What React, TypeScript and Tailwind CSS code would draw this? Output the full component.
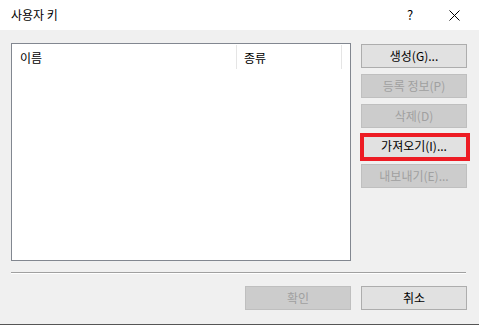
import React from "react";

const font = { fontFamily: '"Noto Sans CJK KR", "Noto Sans", sans-serif' };

function Btn({ label, disabled }: { label: string; disabled?: boolean }) {
    return (
        <div
            className={
                "h-[24px] w-[106px] flex items-center justify-center text-[12px] leading-none border " +
                (disabled
                    ? "bg-[#cccccc] border-[#bfbfbf] text-[#a0a0a0]"
                    : "bg-[#e1e1e1] border-[#adadad] text-black")
            }
        >
            {label}
        </div>
    );
}

export default function App() {
    return (
        <div className="w-[479px] h-[325px] flex flex-col bg-[#f0f0f0] overflow-hidden" style={font}>
            <div className="h-[30px] bg-white flex items-center pl-[11px] text-[12px] text-black">
                <span className="flex-1">사용자 키</span>
                <span className="w-[10px] text-[13px] mr-[34px] text-center">?</span>
                <svg width="11" height="11" viewBox="0 0 11 11" className="mr-[19px]">
                    <path d="M0.5 0.5 L10.5 10.5 M10.5 0.5 L0.5 10.5" stroke="#000" strokeWidth="1" />
                </svg>
            </div>

            <div className="flex pl-[11px] pt-[13px] gap-[10px]">
                <div className="w-[340px] h-[218px] bg-white border border-[#828790]">
                    <div className="flex h-[25px] text-[12px] text-black">
                        <div className="w-[225px] pl-[8px] pt-[4px] border-r border-[#e5e5e5] h-[24px] mt-[1px]">이름</div>
                        <div className="w-[105px] pl-[7px] pt-[4px] border-r border-[#e5e5e5] h-[24px] mt-[1px]">종류</div>
                    </div>
                </div>
                <div className="flex flex-col gap-[6px] pt-[1px]">
                    <Btn label="생성(G)..." />
                    <Btn label="등록 정보(P)" disabled />
                    <Btn label="삭제(D)" disabled />
                    <div className="relative">
                        <Btn label="가져오기(I)..." />
                        <div className="absolute left-[-1px] top-[-1px] w-[110px] h-[28px] border-[4px] border-[#ed1c24]" />
                    </div>
                    <Btn label="내보내기(E)..." disabled />
                </div>
            </div>

            <div className="ml-[11px] mt-[11px] w-[455px] h-[2px] border-t border-[#a0a0a0] border-b border-b-white" />

            <div className="flex justify-end gap-[10px] pr-[12px] mt-[12px]">
                <Btn label="확인" disabled />
                <Btn label="취소" />
            </div>
            <div className="flex-1" />
            <div className="h-[1px] bg-[#555555]" />
        </div>
    );
}
